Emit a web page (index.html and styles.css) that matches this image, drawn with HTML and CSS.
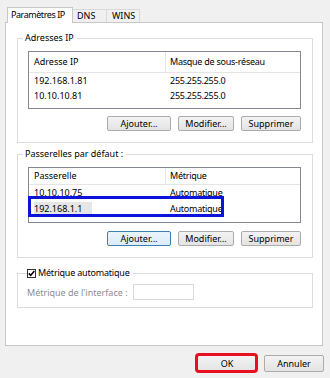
FILE: index.html
```html
<!DOCTYPE html>
<html lang="fr">
<head>
    <meta charset="UTF-8">
    <title>Paramètres TCP/IP avancés</title>
    <link rel="stylesheet" href="styles.css">
</head>
<body>

    <div class="tabs">
        <div class="tab active">Paramètres IP</div>
        <div class="tab tab-dns">DNS</div>
        <div class="tab tab-wins">WINS</div>
    </div>

    <div class="panel">
        <!-- Adresses IP -->
        <div class="group group-ip">
            <span class="group-title">Adresses IP</span>
            <div class="listview lv-ip">
                <div class="lv-row lv-head">
                    <span class="cell">Adresse IP</span>
                    <span class="cell">Masque de sous-réseau</span>
                </div>
                <div class="lv-row">
                    <span class="cell">192.168.1.81</span>
                    <span class="cell">255.255.255.0</span>
                </div>
                <div class="lv-row">
                    <span class="cell">10.10.10.81</span>
                    <span class="cell">255.255.255.0</span>
                </div>
            </div>
            <div class="btn-row">
                <button class="btn btn-add">Ajouter...</button>
                <button class="btn btn-edit">Modifier...</button>
                <button class="btn btn-del">Supprimer</button>
            </div>
        </div>

        <!-- Passerelles -->
        <div class="group group-gw">
            <span class="group-title">Passerelles par défaut :</span>
            <div class="listview lv-gw">
                <div class="lv-row lv-head">
                    <span class="cell">Passerelle</span>
                    <span class="cell">Métrique</span>
                </div>
                <div class="lv-row">
                    <span class="cell">10.10.10.75</span>
                    <span class="cell">Automatique</span>
                </div>
                <div class="lv-row">
                    <span class="cell"><span class="sel">192.168.1.1</span></span>
                    <span class="cell">Automatique</span>
                </div>
                <div class="mark-blue"></div>
            </div>
            <div class="btn-row">
                <button class="btn btn-add focused">Ajouter...</button>
                <button class="btn btn-edit">Modifier...</button>
                <button class="btn btn-del">Supprimer</button>
            </div>
        </div>

        <!-- Métrique automatique -->
        <div class="group group-metric">
            <label class="group-title check-title">
                <svg class="checkbox" width="9" height="9" viewBox="0 0 9 9">
                    <rect x="0.5" y="0.5" width="8" height="8" fill="#fff" stroke="#333"/>
                    <path d="M1.8 4.4 L3.7 6.4 L7.3 2" fill="none" stroke="#000" stroke-width="1.6"/>
                </svg>
                Métrique automatique
            </label>
            <div class="metric-row">
                <span class="metric-label">Métrique de l'interface :</span>
                <span class="metric-input"></span>
            </div>
        </div>
    </div>

    <div class="footer">
        <div class="ok-wrap">
            <button class="btn btn-dlg">OK</button>
            <div class="mark-red"></div>
        </div>
        <button class="btn btn-dlg">Annuler</button>
    </div>

</body>
</html>
```

FILE: styles.css
```css
/* Fenêtre */
body {
    margin: 0;
    width: 330px;
    height: 378px;
    overflow: hidden;
    background-color: #f0f0f0;
    font-family: 'Noto Sans', sans-serif;
    font-size: 9px;
    color: #000;
}

/* Onglets */
.tabs {
    display: flex;
    padding: 7px 0 0 7px;
    height: 15px;
}

.tab {
    box-sizing: border-box;
    height: 13px;
    margin-top: 2px;
    padding-left: 5px;
    line-height: 12px;
    white-space: nowrap;
    background-color: #f0f0f0;
    border: 1px solid #d9d9d9;
    border-bottom: none;
}

.tab.active {
    position: relative;
    z-index: 1;
    height: 16px;
    margin-top: 0;
    padding-left: 3px;
    line-height: 14px;
    width: 66px;
    letter-spacing: -0.45px;
    background-color: #fff;
    border-color: #c8c8c8;
}

.tab-dns {
    width: 34px;
    border-left: none;
    padding-left: 4px;
}

.tab-wins {
    width: 33px;
    border-left: none;
    padding-left: 5px;
}

.panel {
    box-sizing: border-box;
    height: 324px;
    margin: 0 7px 0 5px;
    padding: 15px 9px 0 11px;
    background-color: #fff;
    border: 1px solid #c8c8c8;
}

/* Groupes */
.group {
    position: relative;
    box-sizing: border-box;
    border: 1px solid #dcdcdc;
    padding: 12px 11px 0 10px;
}

.group-ip {
    height: 105px;
}

.group-gw {
    height: 104px;
    margin-top: 11px;
}

.group-metric {
    height: 35px;
    margin-top: 15px;
    padding: 10px 0 0 9px;
}

.group-title {
    position: absolute;
    top: -7px;
    left: 5px;
    padding: 0 3px 0 2px;
    line-height: 12px;
    background-color: #fff;
}

.check-title {
    display: flex;
    align-items: center;
    gap: 2px;
    left: 9px;
    padding-left: 0;
    letter-spacing: -0.2px;
}

/* Listes */
.listview {
    position: relative;
    box-sizing: border-box;
    border: 1px solid #828790;
    background-color: #fff;
}

.lv-ip {
    height: 58px;
}

.lv-gw {
    height: 56px;
}

.lv-row {
    display: grid;
    grid-template-columns: 137px 1fr;
    height: 15px;
    line-height: 15px;
}

.lv-row .cell {
    padding-left: 5px;
    white-space: nowrap;
}

.lv-row .cell + .cell {
    padding-left: 4px;
    letter-spacing: -0.25px;
}

.lv-head {
    height: 20px;
    line-height: 20px;
    border-bottom: 1px solid #e5e5e5;
}

.lv-head .cell:first-child {
    border-right: 1px solid #e5e5e5;
}

.lv-gw .lv-head {
    height: 17px;
    line-height: 18px;
}

.lv-gw .lv-row {
    height: 16px;
    line-height: 16px;
}

.sel {
    background-color: #e6e6e6;
    padding-right: 10px;
}

.mark-blue {
    position: absolute;
    left: -1px;
    top: 28px;
    width: 196px;
    height: 21px;
    box-sizing: border-box;
    border: 3px solid #0a14dc;
}

/* Boutons */
.btn-row {
    display: flex;
    justify-content: flex-end;
    gap: 7px;
    margin-top: 7px;
}

.group-gw .btn-row {
    margin-top: 8px;
}

.btn {
    box-sizing: border-box;
    height: 15px;
    padding: 0;
    font-family: inherit;
    font-size: 9px;
    line-height: 13px;
    color: #000;
    background: linear-gradient(#f3f3f3, #e3e3e3);
    border: 1px solid #acacac;
    border-radius: 2px;
}

.btn-add {
    width: 64px;
}

.btn-edit {
    width: 56px;
}

.btn-del {
    width: 60px;
}

.btn.focused {
    background: linear-gradient(#eaf4fc, #dcecfc);
    border-color: #3c7fb1;
}

/* Métrique */
.metric-row {
    display: flex;
    align-items: center;
}

.metric-label {
    width: 106px;
    color: #8d8d8d;
}

.metric-input {
    box-sizing: border-box;
    width: 61px;
    height: 16px;
    border: 1px solid #d9d9d9;
    background-color: #fff;
}

/* Pied */
.footer {
    display: flex;
    justify-content: flex-end;
    gap: 7px;
    padding: 9px 6px 0 0;
}

.btn-dlg {
    width: 60px;
    height: 17px;
    line-height: 15px;
}

.ok-wrap {
    position: relative;
    display: flex;
}

.mark-red {
    position: absolute;
    left: -2px;
    top: -2px;
    width: 63px;
    height: 20px;
    box-sizing: border-box;
    border: 3px solid #e8101e;
    border-radius: 4px;
}
```
